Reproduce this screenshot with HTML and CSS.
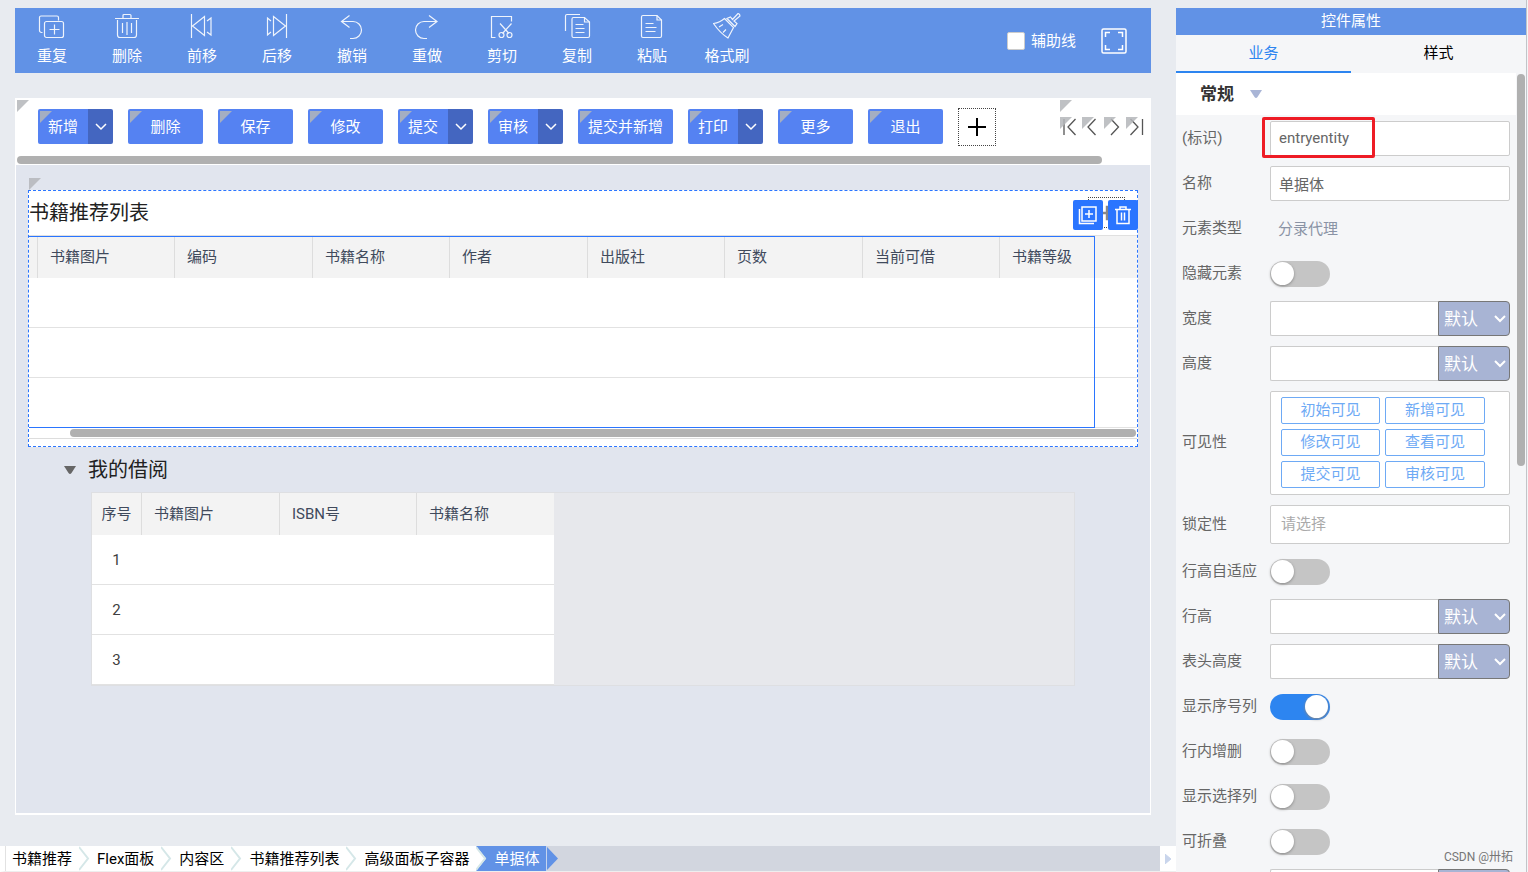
FILE: index.html
```
<!DOCTYPE html>
<html lang="zh-CN">
<head>
<meta charset="utf-8">
<title>控件属性</title>
<link rel="stylesheet" href="styles.css">
</head>
<body>
<svg class="sprite" aria-hidden="true">
  <symbol id="chevron" viewBox="0 0 12 8"><path d="M1 1l5 5 5-5"/></symbol>
  <symbol id="sep" viewBox="0 0 11 25"><path class="sep-fill" d="M0 0L10 12.500L0 25z"/><path class="sep-line" d="M0 1L9 12.500L0 24"/></symbol>
</svg>
<div class="app">
  <main class="designer">
    <div class="toolbar">
      <button class="tool"><svg viewBox="0 0 28 28"><path d="M4.500 19.500h-1a2 2 0 0 1-2-2v-13a1.500 1.500 0 0 1 1.500-1.500h16a1.500 1.500 0 0 1 1.500 1.500v3"/><rect x="6.500" y="8.500" width="19" height="16" rx="2"/><path d="M16.500 11.500v10M11.500 16.500h10"/></svg>重复</button>
      <button class="tool"><svg viewBox="0 0 28 28"><path d="M2 5.500h24M10 5v-2.500q0-1 1-1h6q1 0 1 1v2.500M4.500 7v15q0 2.500 2.500 2.500h14q2.500 0 2.500-2.500v-15M9.500 10v10M14 9v13M18.500 10v10"/></svg>删除</button>
      <button class="tool"><svg viewBox="0 0 28 28"><path d="M3.500 1v24M16.500 3.500v19L4.500 13zM19 8l4-3v17l-4-3"/></svg>前移</button>
      <button class="tool"><svg viewBox="0 0 28 28"><path d="M23.500 1v24M10.500 3.500v19L22.500 13zM8 8L4.500 5v17L8 19"/></svg>后移</button>
      <button class="tool"><svg viewBox="0 0 28 28"><path d="M11.500 2.500L3.500 8.500l8 6M4 8.500h11a8.500 8.500 0 0 1 0 17h-3"/></svg>撤销</button>
      <button class="tool"><svg viewBox="0 0 28 28"><path d="M16 2.500l8 6-8 6M23.500 8.500H11a8.500 8.500 0 0 0 0 17h3"/></svg>重做</button>
      <button class="tool"><svg viewBox="0 0 28 28"><path d="M7.500 24.500h-4v-21h20v5M12 10.500l9 10M23.500 10.500l-9 10"/><circle cx="13.500" cy="22" r="2.500"/><circle cx="21.500" cy="22" r="2.500"/></svg>剪切</button>
      <button class="tool"><svg viewBox="0 0 28 28"><path d="M2.500 18v-15q0-1.500 1.500-1.500h13"/><path d="M21.500 4.500h-11q-1.500 0-1.500 1.500v17q0 1.500 1.500 1.500h14.500q1.500 0 1.500-1.500v-14z"/><path d="M21.500 4.500v4.500h5M12.500 11.500h8M12.500 15.500h9M12.500 19.500h9"/></svg>复制</button>
      <button class="tool"><svg viewBox="0 0 28 28"><path d="M19 2.500h-14q-1.500 0-1.500 1.500v19q0 1.500 1.500 1.500h17q1.500 0 1.500-1.500v-16z"/><path d="M19 2.500v4.500h4.500M7.500 10.500h8M7.500 14.500h11M7.500 18.500h10"/></svg>粘贴</button>
      <button class="tool"><svg viewBox="0 0 28 28"><path d="M11.500 5.500l9 9-5.500 10.500Q7 20 .500 10.500q6.500-1 11-5zM14 5.500l4 4 4 4 2-3-3-2.500 6-5q0-2-2-2.500l-5.500 6-2-2.500zM6 14l4-2.500M10 19.500l3-3"/></svg>格式刷</button>
      <label class="guide"><input type="checkbox" class="guide-box">辅助线</label>
      <button class="full" aria-label="全屏"><svg viewBox="0 0 26 26"><rect x="1" y="1" width="24" height="24" rx="1.500"/><path d="M4.500 9v-4.500h4.500M17 4.500h4.500v4.500M21.500 17v4.500h-4.500M9 21.500h-4.500v-4.500"/></svg></button>
    </div>

    <section class="canvas">
      <div class="formbar corner">
        <div class="split"><button class="act corner">新增</button><button class="drop" aria-label="展开"><svg><use href="#chevron"/></svg></button></div>
        <button class="act corner">删除</button>
        <button class="act corner">保存</button>
        <button class="act corner">修改</button>
        <div class="split"><button class="act corner">提交</button><button class="drop" aria-label="展开"><svg><use href="#chevron"/></svg></button></div>
        <div class="split"><button class="act corner">审核</button><button class="drop" aria-label="展开"><svg><use href="#chevron"/></svg></button></div>
        <button class="act corner">提交并新增</button>
        <div class="split"><button class="act corner">打印</button><button class="drop" aria-label="展开"><svg><use href="#chevron"/></svg></button></div>
        <button class="act corner">更多</button>
        <button class="act corner">退出</button>
        <button class="plus" aria-label="添加"><svg viewBox="0 0 20 20"><path d="M10 1v18M1 10h18"/></svg></button>
        <div class="pager corner">
          <button class="corner" aria-label="第一条"><svg viewBox="0 0 20 20"><path d="M4 2v16M15.500 2L8 10l7.500 8"/></svg></button>
          <button class="corner" aria-label="上一条"><svg viewBox="0 0 20 20"><path d="M13.500 2L6 10l7.500 8"/></svg></button>
          <button class="corner" aria-label="下一条"><svg viewBox="0 0 20 20"><path d="M7 2l7.500 8L7 18"/></svg></button>
          <button class="corner" aria-label="最后一条"><svg viewBox="0 0 20 20"><path d="M4.500 2l7.500 8-7.500 8M16.500 2v16"/></svg></button>
        </div>
      </div>
      <div class="track"><div class="bar"></div></div>

      <div class="stage">
        <section class="entry corner">
          <h2 class="entry-title">书籍推荐列表</h2>
          <div class="ghost"><svg viewBox="0 0 20 20"><path d="M10 1v18M1 10h18"/></svg></div>
          <div class="quick">
            <button aria-label="复制"><svg viewBox="0 0 20 20"><path d="M1.500 4v14.500h14.500"/><rect x="4" y="2" width="14" height="14"/><path d="M11 5v8M7 9h8"/></svg></button>
            <button aria-label="删除"><svg viewBox="0 0 20 20"><path d="M2 4.500h16M7 4v-2h6v2M4 5v13.500h12v-13.500M8.500 7.500v8M11.500 7.500v8"/></svg></button>
          </div>
          <div class="gridbox">
            <table class="grid books">
              <colgroup><col class="c-lead"><col class="c-a"><col class="c-b"><col class="c-a"><col class="c-b"><col class="c-a"><col class="c-b"><col class="c-a"><col></colgroup>
              <thead><tr><th></th><th>书籍图片</th><th>编码</th><th>书籍名称</th><th>作者</th><th>出版社</th><th>页数</th><th>当前可借</th><th>书籍等级</th></tr></thead>
              <tbody><tr><td colspan="9"></td></tr><tr><td colspan="9"></td></tr><tr><td colspan="9"></td></tr></tbody>
            </table>
            <div class="selection"></div>
          </div>
          <div class="entry-track"><div class="bar"></div></div>
        </section>

        <section class="loans">
          <h2 class="loans-title"><svg viewBox="0 0 12 8"><path d="M0 0h12L7.500 7q-1.500 2-3 0z"/></svg>我的借阅</h2>
          <div class="loans-box">
            <table class="grid loan-grid">
              <colgroup><col class="c-num"><col class="c-b"><col class="c-a"><col class="c-b"></colgroup>
              <thead><tr><th>序号</th><th>书籍图片</th><th>ISBN号</th><th>书籍名称</th></tr></thead>
              <tbody>
                <tr><td>1</td><td colspan="3"></td></tr>
                <tr><td>2</td><td colspan="3"></td></tr>
                <tr><td>3</td><td colspan="3"></td></tr>
              </tbody>
            </table>
          </div>
        </section>
      </div>
    </section>

    <nav class="crumbs">
      <a href="#" class="crumb">书籍推荐</a><svg class="sep"><use href="#sep"/></svg>
      <a href="#" class="crumb">Flex面板</a><svg class="sep"><use href="#sep"/></svg>
      <a href="#" class="crumb">内容区</a><svg class="sep"><use href="#sep"/></svg>
      <a href="#" class="crumb">书籍推荐列表</a><svg class="sep"><use href="#sep"/></svg>
      <a href="#" class="crumb">高级面板子容器</a><svg class="sep on"><use href="#sep"/></svg>
      <a href="#" class="crumb current">单据体</a><svg class="tip" viewBox="0 0 12 25"><path d="M0 0l12 12.500L0 25z"/></svg>
      <button class="more" aria-label="更多"><svg viewBox="0 0 6 10"><path d="M0 0l6 5-6 5z"/></svg></button>
    </nav>
  </main>

  <aside class="props">
    <h1 class="props-title">控件属性</h1>
    <div class="tabs"><button class="tab active">业务</button><button class="tab">样式</button></div>
    <div class="props-body">
      <div class="props-list">
        <h2 class="group">常规<svg viewBox="0 0 12 8"><path d="M0 0h12L7.500 7q-1.500 2-3 0z"/></svg></h2>
        <div class="rows">
          <div class="row"><label for="f-id">(标识)</label><div class="field marked"><input id="f-id" class="text" value="entryentity"></div></div>
          <div class="row"><label for="f-name">名称</label><div class="field"><input id="f-name" class="text" value="单据体"></div></div>
          <div class="row"><span>元素类型</span><div class="field plain">分录代理</div></div>
          <div class="row"><label for="f-hide">隐藏元素</label><input id="f-hide" type="checkbox" class="switch"></div>
          <div class="row"><label for="f-w">宽度</label><div class="field unit"><input id="f-w" class="text"><select aria-label="宽度单位"><option>默认</option></select><svg><use href="#chevron"/></svg></div></div>
          <div class="row"><label for="f-h">高度</label><div class="field unit"><input id="f-h" class="text"><select aria-label="高度单位"><option>默认</option></select><svg><use href="#chevron"/></svg></div></div>
          <div class="row"><span>可见性</span><div class="field options"><button>初始可见</button><button>新增可见</button><button>修改可见</button><button>查看可见</button><button>提交可见</button><button>审核可见</button></div></div>
          <div class="row"><label for="f-lock">锁定性</label><div class="field"><input id="f-lock" class="text tall" placeholder="请选择"></div></div>
          <div class="row"><label for="f-auto">行高自适应</label><input id="f-auto" type="checkbox" class="switch"></div>
          <div class="row"><label for="f-rh">行高</label><div class="field unit"><input id="f-rh" class="text"><select aria-label="行高单位"><option>默认</option></select><svg><use href="#chevron"/></svg></div></div>
          <div class="row"><label for="f-hh">表头高度</label><div class="field unit"><input id="f-hh" class="text"><select aria-label="表头高度单位"><option>默认</option></select><svg><use href="#chevron"/></svg></div></div>
          <div class="row"><label for="f-seq">显示序号列</label><input id="f-seq" type="checkbox" class="switch" checked></div>
          <div class="row"><label for="f-inl">行内增删</label><input id="f-inl" type="checkbox" class="switch"></div>
          <div class="row"><label for="f-sel">显示选择列</label><input id="f-sel" type="checkbox" class="switch"></div>
          <div class="row"><label for="f-fold">可折叠</label><input id="f-fold" type="checkbox" class="switch"></div>
          <div class="row"><span></span><div class="field unit"><input class="text" aria-label="数值"><select aria-label="单位"><option></option></select></div></div>
        </div>
      </div>
      <div class="props-track"><div class="bar"></div></div>
    </div>
    <div class="watermark">CSDN @卅拓</div>
  </aside>
</div>
</body>
</html>
```

FILE: styles.css
```
*, *::before, *::after { box-sizing: border-box; }
body {
  margin: 0;
  font: 15px/20px Roboto, "Noto Sans CJK SC", sans-serif;
  color: #000;
  background: #e9ecf1;
}
button, input, select { font: inherit; color: inherit; margin: 0; padding: 0; border: 0; background: none; border-radius: 0; }
button { cursor: pointer; white-space: nowrap; }
h1, h2 { margin: 0; font-weight: 400; }
svg { display: block; fill: none; stroke: currentColor; flex: none; }
.sprite { position: absolute; width: 0; height: 0; }
.bar { height: 8px; border-radius: 4px; background: #b0b0b0; }

.app { display: flex; height: 100vh; overflow: hidden; }
.designer { flex: 1; min-width: 0; display: flex; flex-direction: column; padding-top: 8px; background: #e8ebf0; }

/* Grey triangle marking an editable element */
.corner { position: relative; }
.corner::before {
  content: "";
  position: absolute;
  left: 2px;
  top: 2px;
  width: 12px;
  height: 12px;
  background: #b4b6ba;
  opacity: .85;
  clip-path: polygon(0 0, 100% 0, 0 100%);
}

.toolbar { display: flex; align-items: center; height: 65px; margin: 0 25px 25px 15px; background: #6192e6; color: #fff; flex: none; }
.tool { width: 75px; height: 65px; display: flex; flex-direction: column; align-items: center; gap: 5px; padding: 5px 1px 0 0; }
.tool svg { width: 28px; height: 28px; stroke-width: 1.2; opacity: .9; }
.guide { display: flex; align-items: center; gap: 6px; margin-left: auto; }
.guide-box { appearance: none; width: 18px; height: 18px; background: #fff; border: 1px solid #ccc; border-radius: 2px; }
.full { margin: 0 24px 0 25px; }
.full svg { width: 26px; height: 26px; stroke-width: 1.5; }

.canvas { flex: 1; min-height: 0; display: flex; flex-direction: column; margin: 0 25px 31px 15px; border: 1px solid #fff; border-bottom-width: 2px; background: #e1e5ee; }
.formbar { display: flex; gap: 15px; height: 57px; padding: 10px 0 0 22px; background: #fff; flex: none; }
.formbar.corner::before { left: 1px; top: 1px; }
.act { min-width: 75px; height: 35px; padding: 0 10px; border-radius: 2px; background: #5582f2; color: #fff; }
.split { display: flex; height: 35px; }
.split .act { min-width: 50px; padding: 0; border-radius: 2px 0 0 2px; }
.drop { width: 25px; display: grid; place-items: center; border-radius: 0 2px 2px 0; background: #4466c0; color: #fff; }
.drop svg { width: 12px; height: 8px; stroke-width: 1.5; }
.plus { width: 38px; height: 38px; margin-top: -1px; display: grid; place-items: center; border: 1px dotted #444; }
.plus svg { width: 20px; height: 20px; stroke-width: 2; }
.pager { display: flex; gap: 2px; width: 90px; margin: -10px 0 0 auto; padding-top: 18px; color: #555; }
.pager.corner::before { left: 0; top: 1px; }
.pager button { width: 20px; height: 20px; }
.pager button::before { left: 0; top: 0; }
.pager svg { width: 20px; height: 20px; stroke-width: 1.3; }
.track { height: 9px; padding: 0 48px 0 1px; background: #fff; flex: none; }

.stage { padding: 25px 12px 0; }
.entry { border: 1px dashed #2a75ff; background: #fff; }
.entry.corner::before { left: 0; top: -13px; }
.entry-title, .loans-title { font-size: 20px; line-height: 28px; color: #212121; }
.entry-title { padding: 8px 0; }
.ghost { position: absolute; right: 12px; top: 6px; width: 37px; height: 31px; display: grid; place-items: center; border: 1px dotted #444; color: #888; }
.ghost svg { width: 16px; height: 16px; stroke-width: 3; }
.quick { position: absolute; right: -1px; top: 9px; display: flex; gap: 5px; }
.quick button { width: 30px; height: 30px; display: grid; place-items: center; border-radius: 2px; background: #2a75ff; color: #fff; }
.quick svg { width: 20px; height: 20px; stroke-width: 1.5; }
.gridbox { position: relative; border-top: 1px solid #e0e0e0; }
.selection { position: absolute; left: 0; right: 42px; top: 0; bottom: 0; border: 1px solid #2a75ff; border-left: 0; }
.entry-track { height: 11px; margin-bottom: 7px; padding: 1px 1px 0 41px; border-bottom: 1px solid #ddd; }

.grid { table-layout: fixed; width: 100%; border-collapse: separate; border-spacing: 0; color: #404a5c; }
.grid th { height: 42px; padding: 0 0 0 12px; text-align: left; font-weight: 400; background: #f3f3f3; border-left: 1px solid #ddd; }
.grid th:first-child { border-left: 0; }
.grid td { height: 50px; padding: 0; background: #fff; border-bottom: 1px solid #e2e2e2; color: #404040; text-align: center; }
.grid.books th:first-child { padding: 0; }
.c-lead { width: 8px; }
.c-a { width: 137px; }
.c-b { width: 138px; }
.c-num { width: 49px; }
.loans { padding: 0 63px; }
.loans-title { display: flex; align-items: center; gap: 12px; height: 45px; margin-left: -27px; }
.loans-title svg, .group svg { width: 12px; height: 8px; fill: currentColor; stroke: none; }
.loans-title svg { color: #666; }
.loans-box { border: 1px solid #dedfe2; background: #e7e8ec; }
.loan-grid { width: 462px; }
.grid.loan-grid th:first-child { padding: 0; text-align: center; }

.crumbs { display: flex; height: 26px; background: #d2d6df; border-bottom: 1px solid #eee; border-left: 5px solid #fff; flex: none; }
.crumb { padding: 1px 7px 0; line-height: 24px; background: #fff; color: #000; text-decoration: none; white-space: nowrap; }
.crumb:first-child { box-shadow: inset 1px 0 #e2e2e2; }
.sep { width: 11px; height: 25px; background: #fff; stroke: none; }
.sep-fill { fill: #fff; stroke: none; }
.sep-line { stroke: #d5e7e8; stroke-width: 2; }
.sep.on, .crumb.current { background: #6192e6; color: #fff; }
.tip { width: 12px; height: 25px; border-left: 1px solid #c5d4ee; fill: #6192e6; stroke: none; }
.more { width: 16px; margin-left: auto; display: grid; place-items: center; background: #fff; color: #c9d5ec; }
.more svg { width: 6px; height: 10px; fill: currentColor; }

.props { position: relative; width: 352px; display: flex; flex-direction: column; padding: 8px 1px 0 0; border-right: 1px solid #f4f5f7; box-shadow: inset -1px 0 #c2c4c8; flex: none; }
.props-title { height: 27px; font-size: 15px; line-height: 27px; text-align: center; background: #6192e6; color: #fff; flex: none; }
.tabs { display: flex; height: 38px; background: #f5f6f8; flex: none; }
.tab { flex: 1; border-bottom: 2px solid transparent; }
.tab.active { color: #2d85f0; border-color: #2d85f0; }
.props-body { display: flex; flex: 1; min-height: 0; background: #f5f6f8; }
.props-list { flex: 1; overflow: hidden; }
.props-track { width: 10px; padding: 1px 1px 0; }
.props-track .bar { height: 392px; }
.group { display: flex; align-items: center; gap: 16px; height: 42px; padding-left: 24px; background: #fff; font-size: 17px; font-weight: 700; color: #333; }
.group svg { color: #a9b5d6; }
.rows { display: flex; flex-direction: column; gap: 10px; padding: 6px 6px 0; color: #666; }
.row { display: grid; grid-template-columns: 88px 1fr; align-items: center; min-height: 35px; }
.row > label, .row > span { padding-bottom: 2px; }
.field { position: relative; }
.text { display: block; width: 100%; height: 35px; padding: 0 8px 1px; border: 1px solid #ccc; border-radius: 2px; background: #fff; }
.text.tall { height: 39px; padding: 0 10px 2px; }
.text::placeholder { color: #aaa; }
.marked::after { content: ""; position: absolute; left: -8px; top: -4px; width: 113px; height: 41px; border: 3px solid #ee1c25; border-radius: 2px; pointer-events: none; }
.plain { padding-left: 8px; color: #8a93a5; }
.unit { display: flex; }
.unit .text { flex: 1; min-width: 0; border-right: 0; border-radius: 2px 0 0 2px; }
.unit select { appearance: none; width: 72px; height: 35px; padding-left: 5px; border: 1px solid #777; border-radius: 0 4px 4px 0; background: #a8b4d4; color: #fff; font-size: 17px; }
.unit svg { position: absolute; right: 4px; top: 14px; width: 12px; height: 8px; color: #fff; stroke-width: 2; pointer-events: none; }
.options { display: grid; grid-template-columns: 99px 100px; gap: 5px; padding: 5px 10px 6px; border: 1px solid #ccc; border-radius: 2px; background: #fff; }
.options button { height: 27px; padding-bottom: 2px; border: 1px solid #6eaaf5; border-radius: 2px; color: #6eaaf5; }
.switch { appearance: none; width: 60px; height: 26px; padding: 1px; border-radius: 13px; background: #c5c5c5; }
.switch::before { content: ""; display: block; width: 23px; height: 23px; border-radius: 50%; background: #fff; box-shadow: 0 1px 3px #888; }
.switch:checked { padding-right: 2px; background: #2d85f0; }
.switch:checked::before { margin-left: auto; }
.watermark { position: absolute; right: 14px; bottom: 5px; font-size: 12px; color: #777; }
```
